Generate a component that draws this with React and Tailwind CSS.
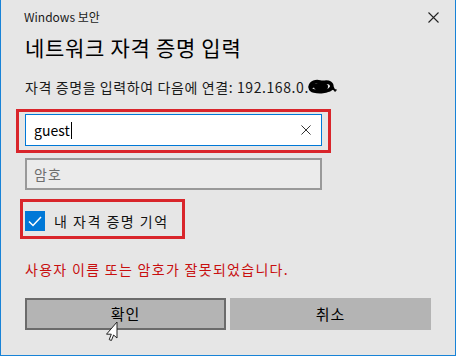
import React from "react";

const font = { fontFamily: '"Noto Sans CJK KR", "Noto Sans", sans-serif' };

const CloseIcon = ({ size = 11, className = "" }) => (
  <svg width={size} height={size} viewBox="0 0 11 11" className={className}>
    <path d="M0.5 0.5 L10.5 10.5 M10.5 0.5 L0.5 10.5" stroke="currentColor" strokeWidth="1.1" fill="none" />
  </svg>
);

const Scribble = () => (
  <svg width="32" height="18" viewBox="0 0 32 18" className="inline-block -ml-[2px]">
    <path
      d="M3 9 C4 4 9 3 13 4 C17 5 20 3 23 5 C26 7 25 11 22 12 C18 14 11 14 7 13 C3 12 2 9 6 8 C10 7 15 9 19 8"
      stroke="#000"
      strokeWidth="3.6"
      strokeLinecap="round"
      fill="none"
    />
    <ellipse cx="14" cy="9" rx="7" ry="4.5" fill="#000" />
    <path d="M23 10 C25 11 27 12 29 12 M26 9 L28 13" stroke="#000" strokeWidth="1.6" strokeLinecap="round" fill="none" />
  </svg>
);

const Cursor = () => (
  <svg width="16" height="22" viewBox="0 0 16 22" className="absolute left-[104px] top-[321px]" style={{ filter: "blur(0.4px)" }}>
    <path d="M12 1 L12 17 L8.6 14 L6.4 19.5 L4.2 18.6 L6.3 13.2 L1.5 13.2 Z" fill="#fff" stroke="#222" strokeWidth="1" strokeLinejoin="round" />
  </svg>
);

export default function App() {
  return (
    <div className="relative w-[456px] h-[356px] bg-[#e6e6e6] border-l border-r border-b border-[#1883d7] overflow-hidden text-[#000]" style={font}>
      {/* Title bar */}
      <div className="flex items-center justify-between pl-[23px] pr-[16px] pt-[9px] h-[25px]">
        <span className="text-[12px] leading-[16px] text-[#1a1a1a]">Windows 보안</span>
        <CloseIcon className="text-[#222] mt-[1px]" />
      </div>

      <div className="px-[24px]">
        <h1 className="mt-[8px] text-[21px] leading-[28px] text-[#000] tracking-[0.7px]">네트워크 자격 증명 입력</h1>

        <p className="mt-[17px] text-[14px] leading-[18px] text-[#1a1a1a] tracking-[0.6px] flex items-center">
          자격 증명을 입력하여 다음에 연결: 192.168.0.
          <Scribble />
        </p>

        {/* User name */}
        <div className="mt-[18px] w-[297px] h-[32px] bg-white border border-[#0078d7] flex items-center justify-between pl-[8px] pr-[10px]">
          <span className="text-[14px] leading-[18px] text-[#000] flex items-center">
            guest
            <span className="inline-block w-[1px] h-[17px] bg-black ml-[1px]" />
          </span>
          <CloseIcon size={10} className="text-[#333]" />
        </div>

        {/* Password */}
        <div className="mt-[12px] w-[297px] h-[32px] bg-[#ebebeb] border-2 border-[#999999] flex items-center pl-[7px]">
          <span className="text-[14px] leading-[18px] text-[#6e6e6e] tracking-[1px]">암호</span>
        </div>

        {/* Remember */}
        <div className="mt-[21px] flex items-center gap-[9px]">
          <span className="w-[20px] h-[20px] bg-[#0078d7] flex items-center justify-center">
            <svg width="14" height="11" viewBox="0 0 14 11">
              <path d="M1 5.5 L5 9.5 L13 1" stroke="#fff" strokeWidth="1.5" fill="none" />
            </svg>
          </span>
          <span className="text-[14px] leading-[20px] text-[#111] tracking-[1.5px]">내 자격 증명 기억</span>
        </div>

        <p className="mt-[29px] text-[14px] leading-[18px] text-[#c80f0f] tracking-[1.3px]">
          사용자 이름 또는 암호가 잘못되었습니다.
        </p>

        {/* Buttons */}
        <div className="mt-[20px] flex gap-[4px]">
          <button className="w-[202px] h-[32px] bg-[#b4b4b4] border-2 border-[#6b6b6b] text-[15px] text-[#000] tracking-[1px]">확인</button>
          <button className="w-[202px] h-[32px] bg-[#b4b4b4] text-[15px] text-[#000] tracking-[1px]">취소</button>
        </div>
      </div>

      {/* Red annotation boxes */}
      <div className="absolute left-[15px] top-[109px] w-[315px] h-[44px] border-[3px] border-[#d9252b] pointer-events-none" />
      <div className="absolute left-[19px] top-[199px] w-[165px] h-[40px] border-[3px] border-[#d9252b] pointer-events-none" />

      <Cursor />
    </div>
  );
}
